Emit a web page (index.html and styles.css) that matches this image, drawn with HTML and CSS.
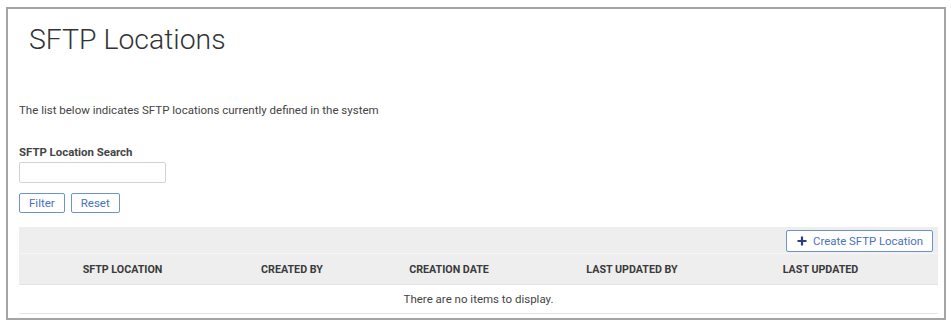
FILE: index.html
```html
<!DOCTYPE html>
<html>
<head>
<meta charset="utf-8">
<link rel="stylesheet" href="styles.css">
</head>
<body>
<div class="frame">
  <h1 class="title">SFTP Locations</h1>
  <p class="intro">The list below indicates SFTP locations currently defined in the system</p>
  <div class="search">
    <label class="search-label">SFTP Location Search</label>
    <input class="search-input" type="text">
  </div>
  <div class="actions">
    <button class="btn">Filter</button>
    <button class="btn">Reset</button>
  </div>
  <div class="grid">
    <div class="toolbar">
      <button class="btn btn-create"><svg class="plus" width="10" height="10" viewBox="0 0 10 10"><path d="M5 0.5v9M0.5 5h9" stroke="#2c3f7c" stroke-width="2.2" fill="none"/></svg>Create SFTP Location</button>
    </div>
    <div class="head">
      <div class="col">SFTP LOCATION</div>
      <div class="col">CREATED BY</div>
      <div class="col">CREATION DATE</div>
      <div class="col">LAST UPDATED BY</div>
      <div class="col">LAST UPDATED</div>
      <div class="col"></div>
    </div>
    <div class="empty">There are no items to display.</div>
  </div>
</div>
</body>
</html>
```
FILE: styles.css
```css
html, body {
  margin: 0;
  padding: 0;
  background: #ffffff;
}
body {
  font-family: Roboto, "Liberation Sans", sans-serif;
  color: #444;
}
.frame {
  margin: 7px 5px 0 6px;
  height: 309px;
  border: 2px solid #a4a4a4;
  padding: 0 6px 0 11px;
}
.title {
  margin: 0;
  padding: 14px 0 0 10px;
  font-size: 28.4px;
  font-weight: 300;
  line-height: 34px;
  color: #333;
}
.intro {
  margin: 45px 0 0 0;
  font-size: 11.5px;
  line-height: 16px;
  color: #444;
}
.search {
  margin-top: 27px;
  display: flex;
  flex-direction: column;
}
.search-label {
  font-size: 11.4px;
  font-weight: 700;
  line-height: 14px;
  color: #444;
}
.search-input {
  margin-top: 3px;
  width: 147px;
  height: 21px;
  box-sizing: border-box;
  border: 1px solid #d2d2d2;
  border-radius: 2px;
  padding: 0 4px;
}
.actions {
  margin-top: 10px;
  display: flex;
  gap: 6px;
}
.btn {
  box-sizing: border-box;
  height: 20px;
  padding: 0 9px;
  font-family: Roboto, "Liberation Sans", sans-serif;
  font-size: 11.5px;
  color: #4a72b8;
  background: #fff;
  border: 1px solid #6d92d0;
  border-radius: 2px;
  line-height: 18px;
}
.grid {
  margin-top: 14px;
}
.toolbar {
  background: #eeeeee;
  height: 26px;
  border-bottom: 1px solid #f6f6f6;
  display: flex;
  justify-content: flex-end;
  align-items: flex-start;
  padding-right: 5px;
}
.btn-create {
  margin-top: 3px;
  height: 22px;
  width: 147px;
  padding: 0 0 0 10px;
  display: flex;
  align-items: center;
  gap: 6px;
  font-size: 11.4px;
}
.plus {
  display: block;
}
.head {
  background: #eeeeee;
  height: 30px;
  display: grid;
  grid-template-columns: 207px 132px 182px 184px 193px 1fr;
  align-items: center;
  border-bottom: 1px solid #e4e4e4;
}
.col {
  text-align: center;
  font-size: 10.7px;
  font-weight: 700;
  color: #3a3a3a;
}
.empty {
  height: 28px;
  line-height: 28px;
  text-align: center;
  font-size: 11.5px;
  color: #444;
  border-bottom: 1px solid #e4e4e4;
}
```
